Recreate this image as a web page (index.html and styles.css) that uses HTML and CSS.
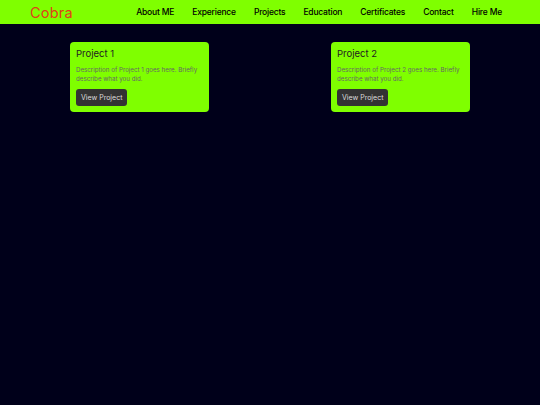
FILE: index.html
```html
<!DOCTYPE html>
<html>
<head>
<meta charset="utf-8">
<link rel="stylesheet" href="styles.css">
</head>
<body>
<header class="navbar">
  <div class="logo">Cobra</div>
  <nav class="links">
    <a href="#">About ME</a>
    <a href="#">Experience</a>
    <a href="#">Projects</a>
    <a href="#">Education</a>
    <a href="#">Certificates</a>
    <a href="#">Contact</a>
    <a href="#">Hire Me</a>
  </nav>
</header>
<main class="projects">
  <div class="card">
    <h3 class="card-title">Project 1</h3>
    <p class="card-desc">Description of Project 1 goes here. Briefly<br>describe what you did.</p>
    <a class="btn" href="#">View Project</a>
  </div>
  <div class="card">
    <h3 class="card-title">Project 2</h3>
    <p class="card-desc">Description of Project 2 goes here. Briefly<br>describe what you did.</p>
    <a class="btn" href="#">View Project</a>
  </div>
</main>
</body>
</html>
```
FILE: styles.css
```css
* { box-sizing: border-box; }
html, body {
  margin: 0;
  padding: 0;
  background: #00001a;
  font-family: Inter, "Open Sans", sans-serif;
  height: 100%;
}
.navbar {
  height: 24px;
  background: #7fff00;
  display: flex;
  align-items: center;
  justify-content: space-between;
  padding: 0 38px 0 30px;
}
.logo {
  font-size: 14.5px;
  color: #e0401a;
  letter-spacing: 0.2px;
}
.links {
  display: flex;
  gap: 18px;
}
.links a {
  font-size: 8.5px;
  font-weight: 500;
  color: #000;
  text-decoration: none;
  letter-spacing: -0.2px;
}
.projects {
  display: flex;
  justify-content: space-between;
  align-items: flex-start;
  padding: 18px 70px 0;
}
.card {
  width: 139px;
  background: #7fff00;
  border-radius: 4px;
  padding: 6px 6px 6px;
}
.card-title {
  margin: 0 0 5px;
  font-size: 9.5px;
  font-weight: 400;
  color: #222;
  line-height: 12px;
}
.card-desc {
  margin: 0 0 1px;
  font-size: 6.2px;
  line-height: 9px;
  color: #666;
  white-space: nowrap;
}
.btn {
  display: inline-block;
  background: #333;
  color: #ddd;
  font-size: 7px;
  text-decoration: none;
  border-radius: 3px;
  padding: 4px 5px;
  line-height: 9px;
}
```
